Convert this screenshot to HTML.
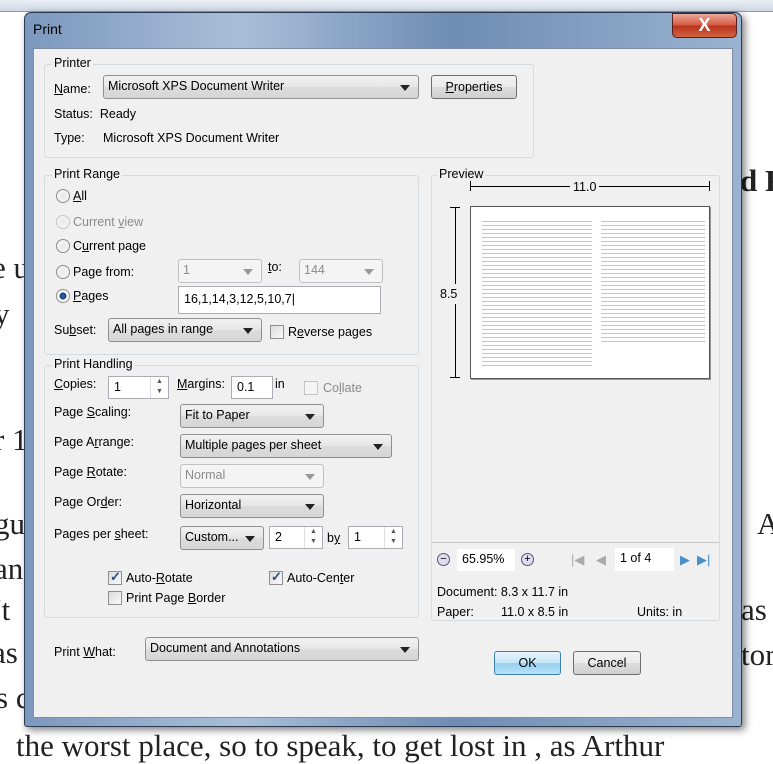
<!DOCTYPE html>
<html><head><meta charset="utf-8"><style>
*{box-sizing:border-box;margin:0;padding:0}
body{width:773px;height:747px;overflow:hidden;background:#fff;position:relative;font-family:"Liberation Sans",sans-serif;font-size:12.5px;color:#000}
.a{position:absolute;white-space:nowrap}
.bg{position:absolute;font-family:"Liberation Serif",serif;font-size:31px;color:#222;white-space:nowrap}
.grp{position:absolute;border:1px solid #d5dade;border-radius:3px}
.gl{position:absolute;background:#f0f0f0;padding:0 2px;color:#000}
.cb{position:absolute;height:24px;border:1px solid #8e8f8f;border-radius:3px;background:linear-gradient(#f2f2f2,#e6e6e6 50%,#dcdcdc 51%,#d6d6d6);padding:3px 0 0 4px}
.cb:after{content:"";position:absolute;right:8px;top:9px;border:5px solid transparent;border-top:6px solid #222;border-bottom:0}
.cb.dis{background:#f4f4f4;border-color:#c0c0c0;color:#8a8a8a}
.cb.dis:after{border-top-color:#999}
.in{position:absolute;height:23px;background:#fff;border:1px solid #abadb3;padding:3px 0 0 5px}
.rad{position:absolute;width:14px;height:14px;border-radius:50%;border:1px solid #8c8c8c;background:radial-gradient(#e8e8e8,#fafafa)}
.chk{position:absolute;width:14px;height:14px;border:1px solid #8e8f8f;background:linear-gradient(135deg,#dcdcdc,#fafafa)}
.chk.on:after{content:"✓";position:absolute;left:1px;top:-3px;font-size:13px;color:#2a4d86;font-weight:bold}
.btn{position:absolute;height:24px;border:1px solid #707070;border-radius:3px;background:linear-gradient(#f2f2f2,#ebebeb 50%,#dddddd 51%,#cfcfcf);text-align:center;padding-top:4px}
.spin{position:absolute;right:0;top:0;width:18px;height:100%;border-left:1px solid #ddd;font-size:7px;color:#555;text-align:center;line-height:10px}
.dis2{color:#8a8a8a}
u{text-decoration:underline}
.ln{position:absolute;background:repeating-linear-gradient(#fff 0,#fff 2px,#c4c4c4 2px,#c4c4c4 3px,#fff 3px,#fff 4px)}
</style></head><body>
<!-- background page -->
<div class="a" style="left:0;top:0;width:773px;height:12px;background:linear-gradient(#e9eef5,#cfd8e4);border-bottom:1px solid #999"></div>
<div class="bg" style="left:-8px;top:250px">e u</div>
<div class="bg" style="left:-6px;top:296px">y</div>
<div class="bg" style="left:-6px;top:422px">r 1</div>
<div class="bg" style="left:-6px;top:506px">gu</div>
<div class="bg" style="left:-6px;top:551px">an</div>
<div class="bg" style="left:-4px;top:592px">'t</div>
<div class="bg" style="left:-8px;top:635px">as</div>
<div class="bg" style="left:-4px;top:680px">s c</div>
<div class="bg" style="left:740px;top:163px;font-weight:bold">d F</div>
<div class="bg" style="left:757px;top:506px">A</div>
<div class="bg" style="left:741px;top:592px">as</div>
<div class="bg" style="left:741px;top:637px">tor</div>
<div class="bg" style="left:16px;top:728px">the worst place, so to speak, to get lost in , as Arthur</div>
<!-- window -->
<div class="a" style="left:24px;top:12px;width:718px;height:715px;border:1px solid #2b3b55;border-radius:7px 7px 3px 3px;background:linear-gradient(90deg,#7c98bd,#a9bfd8 30%,#6f8cb3 60%,#9ab3d0);box-shadow:3px 3px 8px rgba(0,0,0,.5)"></div>
<div class="a" style="left:33px;top:21px;font-size:14px">Print</div>
<div class="a" style="left:672px;top:13px;width:65px;height:25px;border:1px solid #5a2020;border-radius:0 5px 5px 5px;background:linear-gradient(#e9a99a,#d4573f 50%,#b8321c 51%,#d0643f);color:#fff;font-weight:bold;font-size:18px;text-align:center;line-height:23px">X</div>
<div class="a" style="left:33px;top:48px;width:700px;height:670px;background:#f0f0f0;border:1px solid #7e8fa5"></div>

<!-- Printer -->
<div class="grp" style="left:44px;top:64px;width:490px;height:94px"></div>
<div class="gl" style="left:52px;top:56px">Printer</div>
<div class="a" style="left:54px;top:82px"><u>N</u>ame:</div>
<div class="cb" style="left:103px;top:75px;width:316px">Microsoft XPS Document Writer</div>
<div class="btn" style="left:431px;top:75px;width:86px"><u>P</u>roperties</div>
<div class="a" style="left:54px;top:107px">Status:&nbsp; Ready</div>
<div class="a" style="left:54px;top:131px">Type:</div>
<div class="a" style="left:103px;top:131px">Microsoft XPS Document Writer</div>

<!-- Print Range -->
<div class="grp" style="left:44px;top:175px;width:375px;height:180px"></div>
<div class="gl" style="left:52px;top:167px">Print Range</div>
<div class="rad" style="left:56px;top:189px"></div><div class="a" style="left:73px;top:189px"><u>A</u>ll</div>
<div class="rad" style="left:56px;top:215px;border-color:#c5c5c5"></div><div class="a dis2" style="left:73px;top:215px">Current <u>v</u>iew</div>
<div class="rad" style="left:56px;top:239px"></div><div class="a" style="left:73px;top:239px">C<u>u</u>rrent page</div>
<div class="rad" style="left:56px;top:265px"></div><div class="a" style="left:73px;top:265px">Page from:</div>
<div class="cb dis" style="left:178px;top:259px;width:84px">1</div>
<div class="a" style="left:268px;top:260px"><u>t</u>o:</div>
<div class="cb dis" style="left:299px;top:259px;width:84px">144</div>
<div class="rad" style="left:56px;top:289px;background:radial-gradient(circle,#2a6fb8 0,#163f78 3px,#fff 4px)"></div><div class="a" style="left:73px;top:289px"><u>P</u>ages</div>
<div class="in" style="left:178px;top:286px;width:203px;height:28px;padding-top:5px">16,1,14,3,12,5,10,7|</div>
<div class="a" style="left:54px;top:323px">Su<u>b</u>set:</div>
<div class="cb" style="left:108px;top:318px;width:154px">All pages in range</div>
<div class="chk" style="left:270px;top:325px"></div><div class="a" style="left:288px;top:325px">R<u>e</u>verse pages</div>

<!-- Print Handling -->
<div class="grp" style="left:44px;top:365px;width:375px;height:253px"></div>
<div class="gl" style="left:52px;top:357px">Print Handling</div>
<div class="a" style="left:54px;top:377px"><u>C</u>opies:</div>
<div class="in" style="left:108px;top:376px;width:61px">1<div class="spin">▲<br>▼</div></div>
<div class="a" style="left:177px;top:377px"><u>M</u>argins:</div>
<div class="in" style="left:231px;top:376px;width:42px">0.1</div>
<div class="a" style="left:275px;top:377px">in</div>
<div class="chk" style="left:304px;top:381px;border-color:#c5c5c5;background:#f4f4f4"></div><div class="a dis2" style="left:323px;top:381px">Co<u>l</u>late</div>
<div class="a" style="left:54px;top:405px">Page <u>S</u>caling:</div>
<div class="cb" style="left:180px;top:404px;width:144px">Fit to Paper</div>
<div class="a" style="left:54px;top:435px">Page A<u>r</u>range:</div>
<div class="cb" style="left:180px;top:434px;width:212px">Multiple pages per sheet</div>
<div class="a" style="left:54px;top:465px">Page <u>R</u>otate:</div>
<div class="cb dis" style="left:180px;top:464px;width:144px">Normal</div>
<div class="a" style="left:54px;top:495px">Page Or<u>d</u>er:</div>
<div class="cb" style="left:180px;top:494px;width:144px">Horizontal</div>
<div class="a" style="left:54px;top:527px">Pages per <u>s</u>heet:</div>
<div class="cb" style="left:180px;top:526px;width:84px">Custom...</div>
<div class="in" style="left:269px;top:526px;width:54px">2<div class="spin">▲<br>▼</div></div>
<div class="a" style="left:327px;top:531px">b<u>y</u></div>
<div class="in" style="left:348px;top:526px;width:55px">1<div class="spin">▲<br>▼</div></div>
<div class="chk on" style="left:108px;top:571px"></div><div class="a" style="left:126px;top:571px">Auto-<u>R</u>otate</div>
<div class="chk on" style="left:269px;top:571px"></div><div class="a" style="left:287px;top:571px">Auto-Cen<u>t</u>er</div>
<div class="chk" style="left:108px;top:591px"></div><div class="a" style="left:126px;top:591px">Print Page <u>B</u>order</div>

<!-- Preview -->
<div class="grp" style="left:431px;top:175px;width:289px;height:446px"></div>
<div class="gl" style="left:437px;top:167px">Preview</div>
<div class="a" style="left:470px;top:186px;width:240px;height:1px;background:#000"></div>
<div class="a" style="left:470px;top:181px;width:1px;height:10px;background:#000"></div>
<div class="a" style="left:709px;top:181px;width:1px;height:10px;background:#000"></div>
<div class="a" style="left:570px;top:180px;background:#f0f0f0;padding:0 3px">11.0</div>
<div class="a" style="left:455px;top:207px;width:1px;height:171px;background:#000"></div>
<div class="a" style="left:450px;top:207px;width:10px;height:1px;background:#000"></div>
<div class="a" style="left:450px;top:377px;width:10px;height:1px;background:#000"></div>
<div class="a" style="left:440px;top:284px;background:#f0f0f0;padding:3px 0">8.5</div>
<div class="a" style="left:470px;top:206px;width:240px;height:173px;background:#fff;border:1px solid #555;box-shadow:1px 1px 0 #999"></div>
<div class="ln" style="left:482px;top:219px;width:110px;height:147px"></div>
<div class="ln" style="left:601px;top:219px;width:104px;height:126px"></div>
<div class="a" style="left:432px;top:542px;width:287px;height:1px;background:#c8c8c8"></div>
<div class="a" style="left:437px;top:553px;width:13px;height:13px;border-radius:50%;border:1px solid #557;background:#dde;font-size:11px;line-height:10px;text-align:center">−</div>
<div class="in" style="left:457px;top:549px;width:58px;height:22px;border:none">65.95%</div>
<div class="a" style="left:521px;top:553px;width:13px;height:13px;border-radius:50%;border:1px solid #557;background:#dde;font-size:11px;line-height:11px;text-align:center">+</div>
<div class="a" style="left:571px;top:552px;color:#aaa;font-size:13px">|◀</div>
<div class="a" style="left:596px;top:552px;color:#aaa;font-size:13px">◀</div>
<div class="in" style="left:615px;top:548px;width:59px;height:23px;border:none">1 of 4</div>
<div class="a" style="left:680px;top:552px;color:#4a90c8;font-size:13px">▶</div>
<div class="a" style="left:697px;top:552px;color:#4a90c8;font-size:13px">▶|</div>
<div class="a" style="left:437px;top:585px">Document: 8.3 x 11.7 in</div>
<div class="a" style="left:437px;top:605px">Paper:</div>
<div class="a" style="left:501px;top:605px">11.0 x 8.5 in</div>
<div class="a" style="left:637px;top:605px">Units: in</div>

<!-- bottom -->
<div class="a" style="left:54px;top:645px">Print <u>W</u>hat:</div>
<div class="cb" style="left:145px;top:637px;width:274px">Document and Annotations</div>
<div class="btn" style="left:494px;top:651px;width:67px;border-color:#3c7fb1;background:linear-gradient(#e5f4fc,#c4e5f6 50%,#98d1ef 51%,#b6e1f7)">OK</div>
<div class="btn" style="left:573px;top:651px;width:68px">Cancel</div>
</body></html>
